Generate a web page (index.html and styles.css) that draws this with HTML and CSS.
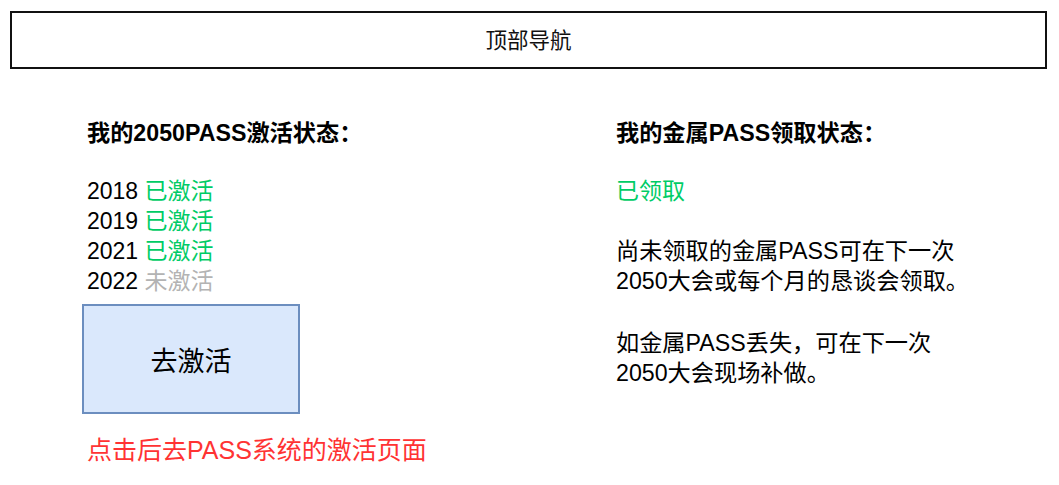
FILE: index.html
```html
<!DOCTYPE html>
<html lang="zh-CN">
<head>
<meta charset="utf-8">
<title>2050 PASS</title>
<link rel="stylesheet" href="styles.css">
</head>
<body>
<header class="nav">顶部导航</header>
<main class="content">
  <section class="col col-left">
    <h2 class="title">我的2050PASS激活状态：</h2>
    <ul class="years">
      <li>2018 <span class="ok">已激活</span></li>
      <li>2019 <span class="ok">已激活</span></li>
      <li>2021 <span class="ok">已激活</span></li>
      <li>2022 <span class="off">未激活</span></li>
    </ul>
    <button class="activate" type="button">去激活</button>
    <p class="note">点击后去PASS系统的激活页面</p>
  </section>
  <section class="col col-right">
    <h2 class="title">我的金属PASS领取状态：</h2>
    <p class="status ok">已领取</p>
    <p class="para">尚未领取的金属PASS可在下一次<br>2050大会或每个月的恳谈会领取。</p>
    <p class="para para2">如金属PASS丢失，可在下一次<br>2050大会现场补做。</p>
  </section>
</main>
</body>
</html>
```
FILE: styles.css
```css
* { box-sizing: border-box; }
html, body { margin: 0; padding: 0; background: #fff; }
body {
  font-family: "Liberation Sans", Arial, "Noto Sans CJK SC", sans-serif;
  color: #000;
  width: 1059px;
  height: 485px;
  overflow: hidden;
}
.nav {
  margin: 11px 12px 0 10px;
  height: 58px;
  border: 2px solid #111;
  display: flex;
  align-items: center;
  justify-content: center;
  padding-bottom: 3px;
  font-size: 21.5px;
  color: #111;
}
.content {
  display: grid;
  grid-template-columns: 529px 1fr;
  padding: 49px 0 0 87px;
}
.col { display: flex; flex-direction: column; align-items: flex-start; }
.title {
  margin: 0;
  font-size: 23.2px;
  font-weight: bold;
  line-height: 30px;
}
.years {
  list-style: none;
  margin: 28px 0 0;
  padding: 0;
  font-size: 23px;
  line-height: 30px;
}
.ok { color: #00cc66; }
.off { color: #b3b3b3; }
.activate {
  margin: 8px 0 0 -5px;
  width: 218px;
  height: 110px;
  background: #dae8fc;
  border: 2px solid #6c8ebf;
  font-family: inherit;
  font-size: 27px;
  color: #000;
  padding: 0;
}
.note {
  margin: 21px 0 0;
  color: #ff3333;
  font-size: 25px;
  line-height: 30px;
}
.status {
  margin: 28px 0 0;
  font-size: 23px;
  line-height: 30px;
}
.para {
  margin: 30px 0 0;
  font-size: 23.2px;
  line-height: 30px;
}
.para2 { margin-top: 32px; }
```
